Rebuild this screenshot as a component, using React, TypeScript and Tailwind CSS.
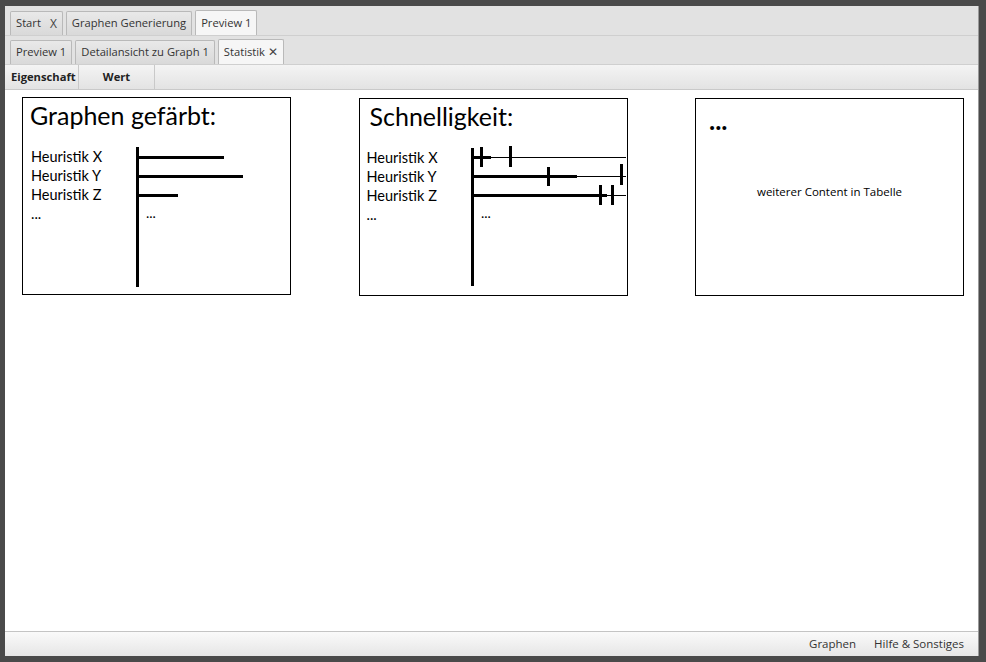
// App.tsx
const UI_FONT = { fontFamily: '"Open Sans", "Noto Sans", sans-serif' };
const CARD_FONT = { fontFamily: 'Lato, "Open Sans", sans-serif' };

interface TabProps {
  label: string;
  active?: boolean;
  close?: string;
  closeGap?: string;
}

const Tab: React.FC<TabProps> = ({ label, active, close, closeGap = 'ml-[3px]' }) => (
  <div
    className={`h-[24px] flex items-center px-[5px] border border-b-0 border-[#b9b9b9] rounded-t-[2px] text-[11.2px] text-[#333] ${
      active ? 'bg-[#f6f6f6] h-[25px]' : 'bg-gradient-to-b from-[#e9e9e9] to-[#d9d9d9]'
    }`}
  >
    <span>{label}</span>
    {close && <span className={`text-[12px] text-[#444] ${closeGap}`}>{close}</span>}
  </div>
);

const labels = ['Heuristik X', 'Heuristik Y', 'Heuristik Z', '...'];

const LabelColumn: React.FC<{ width: string; pad: string }> = ({ width, pad }) => (
  <div className={`${width} ${pad} pt-[3px] shrink-0 text-[14.5px] leading-[19px] text-black`}>
    {labels.map((l) => (
      <div key={l}>{l}</div>
    ))}
  </div>
);

const ColoredChart = () => (
  <svg width="154" height="146" className="block shrink-0">
    <rect x="0" y="3" width="3" height="140" fill="#000" />
    <rect x="3" y="12" width="85" height="3" fill="#000" />
    <rect x="3" y="31" width="104" height="3" fill="#000" />
    <rect x="3" y="50" width="39" height="3" fill="#000" />
    <text x="10" y="74" fontSize="14" fontFamily="Lato, sans-serif" fill="#000">
      ...
    </text>
  </svg>
);

const SpeedChart = () => (
  <svg width="155" height="146" className="block shrink-0">
    <rect x="0" y="3" width="3" height="138" fill="#000" />
    {/* dünne Linien */}
    <rect x="3" y="12" width="152" height="1" fill="#000" />
    <rect x="3" y="31" width="152" height="1" fill="#000" />
    <rect x="3" y="50" width="152" height="1" fill="#000" />
    {/* Heuristik X */}
    <rect x="3" y="11" width="17" height="3" fill="#000" />
    <rect x="9" y="2" width="3" height="20" fill="#000" />
    <rect x="38" y="1" width="3" height="21" fill="#000" />
    {/* Heuristik Y */}
    <rect x="3" y="30" width="103" height="3" fill="#000" />
    <rect x="76" y="22" width="3" height="19" fill="#000" />
    <rect x="149" y="19" width="3" height="21" fill="#000" />
    {/* Heuristik Z */}
    <rect x="3" y="49" width="133" height="3" fill="#000" />
    <rect x="128" y="40" width="3" height="20" fill="#000" />
    <rect x="140" y="40" width="3" height="20" fill="#000" />
    <text x="10" y="73" fontSize="14" fontFamily="Lato, sans-serif" fill="#000">
      ...
    </text>
  </svg>
);

const App: React.FC = () => {
  return (
    <div
      className="w-[986px] h-[662px] bg-[#4a4a4a] pt-[6px] pl-[5px] pr-[7px] pb-[6px] flex flex-col"
      style={UI_FONT}
    >
      <div className="flex-1 flex flex-col bg-white border-r border-[#9a9a9a]">
        {/* Tabzeile 1 */}
        <div className="h-[30px] shrink-0 bg-[#e2e2e2] border-b border-[#cfcfcf] flex items-end gap-[3px] px-[5px]">
          <Tab label="Start" close="X" closeGap="ml-[9px]" />
          <Tab label="Graphen Generierung" />
          <Tab label="Preview 1" active />
        </div>
        {/* Tabzeile 2 */}
        <div className="h-[29px] shrink-0 bg-[#e2e2e2] border-b border-[#cfcfcf] flex items-end gap-[3px] px-[5px]">
          <Tab label="Preview 1" />
          <Tab label="Detailansicht zu Graph 1" />
          <Tab label="Statistik" close="✕" active />
        </div>
        {/* Tabellenkopf */}
        <div className="h-[25px] shrink-0 bg-gradient-to-b from-[#f4f4f4] to-[#e3e3e3] border-b border-[#c9c9c9] flex text-[11.2px] font-bold text-[#222]">
          <div className="w-[74px] border-r border-[#c9c9c9] flex items-center pl-[6px]">Eigenschaft</div>
          <div className="w-[76px] border-r border-[#c9c9c9] flex items-center justify-center">Wert</div>
        </div>

        {/* Inhalt */}
        <div className="flex-1 flex items-start justify-between pl-[17px] pr-[14px] pt-[7px]" style={CARD_FONT}>
          <div className="w-[269px] h-[198px] border border-black flex flex-col">
            <div className="h-[46px] pl-[7px] pt-[1px] text-[25px] leading-[32px] text-black">Graphen gefärbt:</div>
            <div className="flex">
              <LabelColumn width="w-[113px]" pad="pl-[8px]" />
              <ColoredChart />
            </div>
          </div>

          <div className="mt-[1px] w-[269px] h-[198px] border border-black flex flex-col">
            <div className="h-[46px] pl-[10px] pt-[1px] text-[25px] leading-[32px] text-black">Schnelligkeit:</div>
            <div className="flex">
              <LabelColumn width="w-[111px]" pad="pl-[7px]" />
              <SpeedChart />
            </div>
          </div>

          <div className="mt-[1px] w-[269px] h-[198px] border border-black flex flex-col">
            <div className="pl-[13px] pt-[8px] text-[26px] font-bold leading-[26px] text-black">...</div>
            <div className="mt-[50px] text-center text-[11.5px] text-black" style={UI_FONT}>
              weiterer Content in Tabelle
            </div>
          </div>
        </div>

        {/* Statusleiste */}
        <div className="h-[25px] shrink-0 border-t border-[#c4c4c4] bg-gradient-to-b from-[#fafafa] to-[#e6e6e6] flex items-center justify-end gap-[18px] pr-[14px] text-[11.5px] text-[#333]">
          <span>Graphen</span>
          <span>Hilfe &amp; Sonstiges</span>
        </div>
      </div>
    </div>
  );
};

export default App;
